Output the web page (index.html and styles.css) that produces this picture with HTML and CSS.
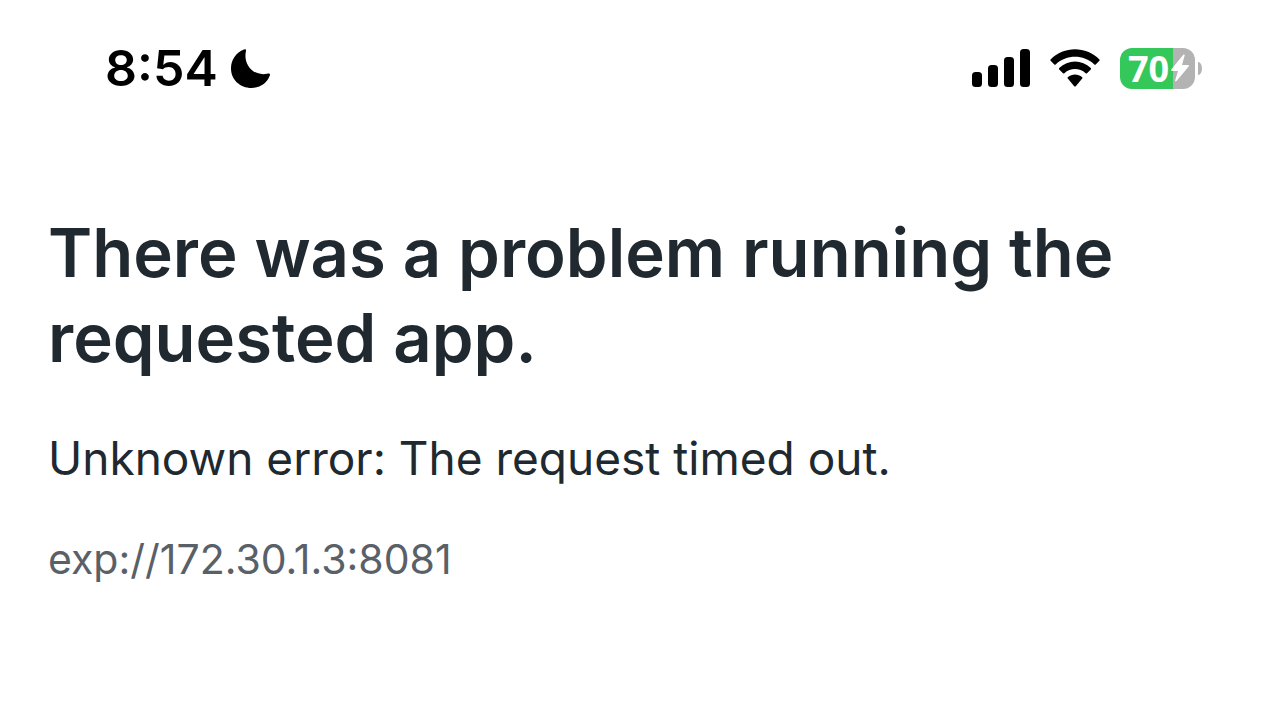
FILE: index.html
```html
<!DOCTYPE html>
<html lang="en">
<head>
    <meta charset="utf-8">
    <meta name="viewport" content="width=device-width, initial-scale=1">
    <title>Error</title>
    <link rel="stylesheet" href="styles.css">
</head>
<body>
    <!-- Status bar -->
    <header class="status-bar">
        <div class="status-left">
            <time class="clock">8:54</time>
            <svg class="moon" viewBox="0 0 40 40" aria-hidden="true">
                <path d="M13 1.500C14.500.8 15.300 1.500 15 3C12 15 21 28.500 36 25.800C38 25.400 39.500 25.500 38.800 27.500C36 35 29 40 20.500 40C9 40 0 31.500 0 20.500C0 12 5 4.500 13 1.500Z"/>
            </svg>
        </div>
        <div class="status-right">
            <svg class="signal" viewBox="0 0 58 38" aria-hidden="true">
                <rect x="0" y="23" width="10" height="15" rx="3.500"/>
                <rect x="16" y="16" width="10" height="22" rx="3.500"/>
                <rect x="32" y="8" width="10" height="30" rx="3.500"/>
                <rect x="48" y="0" width="10" height="38" rx="3.500"/>
            </svg>
            <svg class="wifi" viewBox="0 0 50 38" aria-hidden="true">
                <path d="M.6 10.400C14-3.200 36-3.200 49.400 10.400Q50 11 49.400 11.700L45.700 15.400Q45 16 44.300 15.400C33.500 5.200 16.500 5.200 5.700 15.400Q5 16 4.300 15.400L.6 11.700Q0 11 .6 10.400Z"/>
                <path d="M9.200 19.100C18 10.300 32 10.300 40.800 19.100Q41.400 19.800 40.800 20.500L37 24.300Q36.300 24.900 35.600 24.300C29.500 18.700 20.500 18.700 14.400 24.300Q13.700 24.900 13 24.300L9.200 20.500Q8.600 19.800 9.200 19.100Z"/>
                <path d="M17.800 28.200C22 24.600 28 24.600 32.200 28.200Q32.900 28.900 32.200 29.600L25.800 37.200Q25 38 24.200 37.200L17.800 29.600Q17.100 28.900 17.800 28.200Z"/>
            </svg>
            <div class="battery">
                <span class="battery-body">
                    <span class="battery-level">70</span>
                    <svg class="bolt" viewBox="0 0 18 28" aria-hidden="true">
                        <path d="M12.500.5C13.500.2 14 .8 13.600 1.800L11 11H17C18 11 18.300 11.800 17.700 12.600L5.500 27C4.700 27.700 3.800 27.200 4.200 26.200L7 17H1C0 17 0 16 .5 15.300Z"/>
                    </svg>
                </span>
                <span class="battery-cap"></span>
            </div>
        </div>
    </header>

    <!-- Error message -->
    <main class="error">
        <h1>There was a problem running the requested app.</h1>
        <p class="message">Unknown error: The request timed out.</p>
        <p class="url">exp://172.30.1.3:8081</p>
    </main>
</body>
</html>
```
FILE: styles.css
```css
:root {
    --text-color: #20292f;
    --muted-color: #596068;
    --battery-green: #34c759;
    --battery-gray: #b3b3b3;
}

body {
    margin: 0;
    background-color: #fff;
    color: var(--text-color);
    font-family: Inter, sans-serif;
}

/* Status bar */
.status-bar {
    display: flex;
    justify-content: space-between;
    align-items: center;
    height: 136px;
    padding: 0 82px 0 105px;
    color: #000;
}

.status-left,
.status-right,
.battery {
    display: flex;
    align-items: center;
}

.status-left {
    gap: 13px;
}

.status-right {
    gap: 20px;
}

.clock {
    font-size: 50px;
    font-weight: 600;
}

.moon {
    width: 40px;
    height: 40px;
}

.signal {
    width: 58px;
    height: 38px;
}

.wifi {
    width: 50px;
    height: 38px;
}

.battery {
    gap: 3px;
}

.battery-body {
    display: flex;
    align-items: center;
    gap: 2px;
    box-sizing: border-box;
    width: 75px;
    height: 41px;
    padding-left: 8px;
    border-radius: 12px;
    background: linear-gradient(to right, var(--battery-green) 71%, var(--battery-gray) 71%);
    color: #fff;
}

.battery-level {
    font-family: "Open Sans", sans-serif;
    font-size: 36px;
    font-weight: 700;
}

.bolt {
    flex-shrink: 0;
    width: 18px;
    height: 28px;
    fill: #fff;
}

.battery-cap {
    width: 4px;
    height: 13px;
    border-radius: 0 4px 4px 0 / 0 7px 7px 0;
    background: var(--battery-gray);
}

/* Error message */
.error {
    padding: 74px 48px;
}

h1 {
    margin: 0;
    font-size: 67px;
    font-weight: 600;
    line-height: 85px;
}

.message {
    margin: 48px 0 0;
    font-size: 46px;
    line-height: 60px;
}

.url {
    margin: 45px 0 0;
    color: var(--muted-color);
    font-size: 41px;
    line-height: 52px;
}
```
